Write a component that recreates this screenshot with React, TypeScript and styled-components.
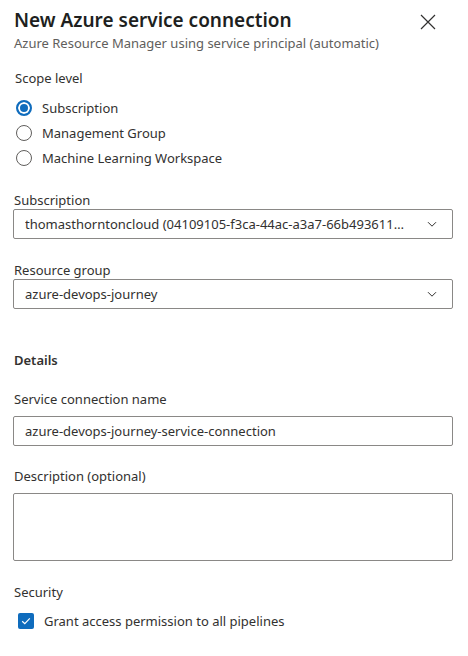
import styled, { createGlobalStyle } from "styled-components";

const GlobalStyle = createGlobalStyle`
  body {
    margin: 0;
    background: #ffffff;
    font-family: "Noto Sans", "Open Sans", sans-serif;
    color: #323130;
  }
`;

export default function App() {
  return (
    <>
      <GlobalStyle />
      <Panel>
        <Header>
          <div>
            <Title>New Azure service connection</Title>
            <Subtitle>Azure Resource Manager using service principal (automatic)</Subtitle>
          </div>
          <CloseButton aria-label="Close">
            <svg width="16" height="16" viewBox="0 0 16 16">
              <path d="M1 1 L15 15 M15 1 L1 15" stroke="#323130" strokeWidth="1.2" />
            </svg>
          </CloseButton>
        </Header>

        <Section>
          <Label>Scope level</Label>
          <RadioList>
            <RadioRow>
              <Radio checked />
              Subscription
            </RadioRow>
            <RadioRow>
              <Radio />
              Management Group
            </RadioRow>
            <RadioRow>
              <Radio />
              Machine Learning Workspace
            </RadioRow>
          </RadioList>
        </Section>

        <Field top={23}>
          <Label>Subscription</Label>
          <Dropdown>
            <DropdownText>thomasthorntoncloud (04109105-f3ca-44ac-a3a7-66b493611…</DropdownText>
            <Chevron />
          </Dropdown>
        </Field>

        <Field top={22}>
          <Label>Resource group</Label>
          <Dropdown>
            <DropdownText>azure-devops-journey</DropdownText>
            <Chevron />
          </Dropdown>
        </Field>

        <SectionTitle>Details</SectionTitle>

        <Field top={20}>
          <Label spaced>Service connection name</Label>
          <TextBox>azure-devops-journey-service-connection</TextBox>
        </Field>

        <Field top={21}>
          <Label spaced>Description (optional)</Label>
          <TextArea />
        </Field>

        <Field top={22}>
          <Label>Security</Label>
          <CheckRow>
            <CheckBox>
              <svg width="12" height="12" viewBox="0 0 12 12">
                <path d="M2.2 6.2 L4.8 8.6 L9.8 3.4" fill="none" stroke="#fff" strokeWidth="1.2" />
              </svg>
            </CheckBox>
            Grant access permission to all pipelines
          </CheckRow>
        </Field>
      </Panel>
    </>
  );
}

const Chevron = () => (
  <svg width="12" height="12" viewBox="0 0 12 12">
    <path d="M2 4.2 L6 8.2 L10 4.2" fill="none" stroke="#323130" strokeWidth="1" />
  </svg>
);

const Panel = styled.div`
  width: 468px;
  height: 656px;
  box-sizing: border-box;
  padding: 6px 16px 0 13px;
  overflow: hidden;
`;

const Header = styled.div`
  display: flex;
  justify-content: space-between;
  align-items: flex-start;
  padding-left: 1px;
`;

const Title = styled.div`
  font-size: 19px;
  font-weight: 600;
  line-height: 28px;
  color: #201f1e;
`;

const Subtitle = styled.div`
  font-size: 13px;
  line-height: 18px;
  color: #605e5c;
`;

const CloseButton = styled.div`
  margin: 7px 16px 0 0;
  width: 16px;
  height: 16px;
`;

const Section = styled.div`
  margin-top: 17px;
  padding-left: 1px;
`;

const Label = styled.div<{ spaced?: boolean }>`
  font-size: 13px;
  line-height: 18px;
  color: #323130;
  margin-bottom: ${(p) => (p.spaced ? "8px" : "0")};
  padding-left: 1px;
`;

const RadioList = styled.div`
  display: flex;
  flex-direction: column;
  gap: 5px;
  margin-top: 11px;
`;

const RadioRow = styled.div`
  display: flex;
  align-items: center;
  gap: 10px;
  font-size: 13px;
  line-height: 20px;
  padding-left: 2px;
`;

const Radio = styled.span<{ checked?: boolean }>`
  width: 16px;
  height: 16px;
  box-sizing: border-box;
  border-radius: 50%;
  border: ${(p) => (p.checked ? "2px solid #0f6cbd" : "1px solid #605e5c")};
  background: ${(p) => (p.checked ? "#0f6cbd" : "#fff")};
  box-shadow: ${(p) => (p.checked ? "inset 0 0 0 2px #fff" : "none")};
  flex-shrink: 0;
`;

const Field = styled.div<{ top: number }>`
  margin-top: ${(p) => p.top}px;
`;

const Dropdown = styled.div`
  height: 30px;
  width: 440px;
  box-sizing: border-box;
  border: 1px solid #8a8886;
  border-radius: 2px;
  display: flex;
  align-items: center;
  padding: 0 14px 0 11px;
  gap: 8px;
`;

const DropdownText = styled.span`
  flex: 1;
  font-size: 13px;
  white-space: nowrap;
  overflow: hidden;
  text-overflow: ellipsis;
  color: #323130;
`;

const SectionTitle = styled.div`
  margin-top: 41px;
  font-size: 13px;
  font-weight: 600;
  line-height: 20px;
  color: #323130;
  padding-left: 1px;
`;

const TextBox = styled.div`
  height: 30px;
  width: 440px;
  box-sizing: border-box;
  border: 1px solid #8a8886;
  border-radius: 2px;
  display: flex;
  align-items: center;
  padding: 0 11px;
  font-size: 13px;
  color: #323130;
`;

const TextArea = styled.div`
  height: 68px;
  width: 440px;
  box-sizing: border-box;
  border: 1px solid #8a8886;
  border-radius: 2px;
`;

const CheckRow = styled.div`
  display: flex;
  align-items: center;
  gap: 10px;
  font-size: 13px;
  line-height: 20px;
  padding-left: 5px;
  margin-top: 10px;
`;

const CheckBox = styled.span`
  width: 16px;
  height: 16px;
  border-radius: 2px;
  background: #0f6cbd;
  display: flex;
  align-items: center;
  justify-content: center;
  flex-shrink: 0;
`;
